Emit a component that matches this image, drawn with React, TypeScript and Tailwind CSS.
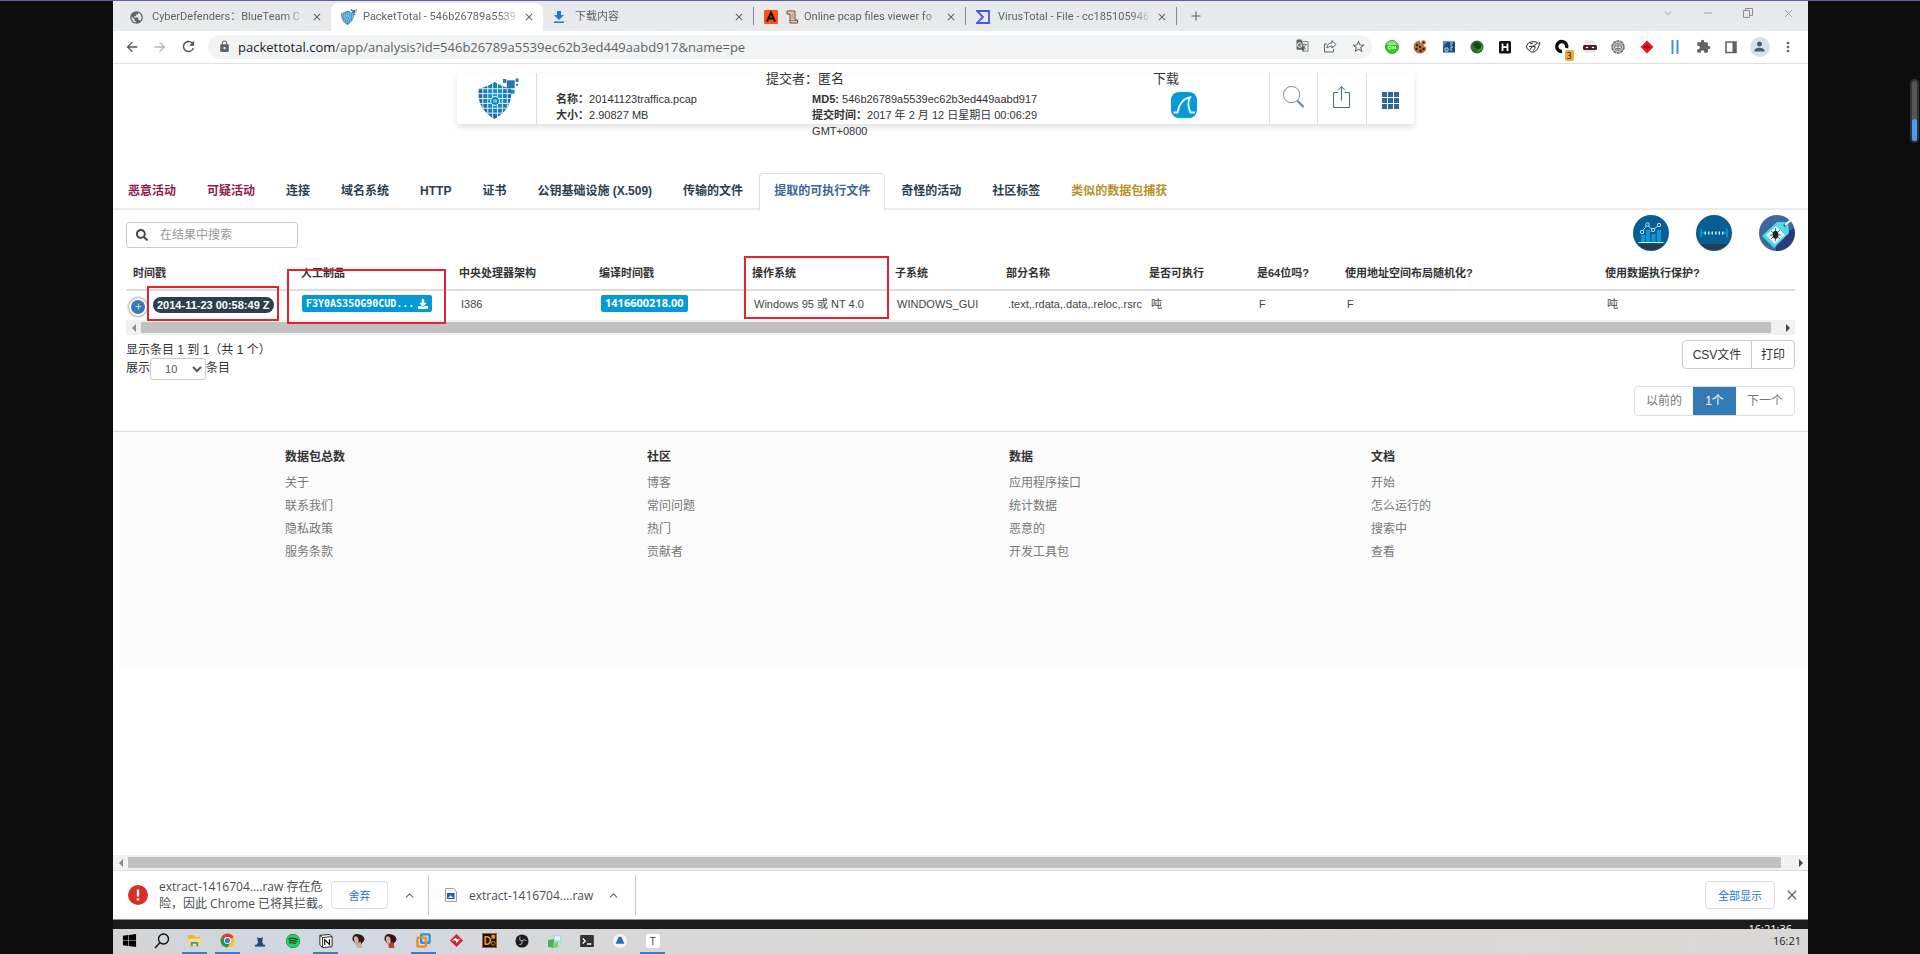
import type { ReactNode } from "react";
import {
  MdArrowBack,
  MdArrowForward,
  MdClose,
  MdExtension,
  MdGTranslate,
  MdLock,
  MdMoreVert,
  MdPerson,
  MdPublic,
  MdRefresh,
  MdStarBorder,
} from "react-icons/md";
import { FaDownload, FaSearch, FaSpotify, FaWindows } from "react-icons/fa";
import { ChevronDown, ChevronUp, Minus, Plus, X } from "lucide-react";

const chromeFont = "font-['Open_Sans','Noto_Sans_CJK_SC',sans-serif]";
const pageFont = "font-['Liberation_Sans','Noto_Sans_CJK_SC',sans-serif]";

function Shield({ className }: { className: string }) {
  const lines = [5, 10, 15, 20, 25, 30];
  return (
    <svg viewBox="0 0 42 42" className={className} aria-hidden="true">
      <defs>
        <clipPath id="shield-shape">
          <path d="M1 11Q10 9 17 4Q24 9 34 11Q36 31 17 42Q-2 31 1 11Z" />
        </clipPath>
        <radialGradient id="shield-fill">
          <stop offset="0" stopColor="#0aa5e2" />
          <stop offset="0.6" stopColor="#1181bd" />
          <stop offset="1" stopColor="#2d5f93" />
        </radialGradient>
      </defs>
      <g clipPath="url(#shield-shape)">
        <rect width="36" height="42" fill="url(#shield-fill)" />
        {lines.map((p) => (
          <g key={p} stroke="#fff" strokeWidth="0.900">
            <path d={`M${p} 0V42`} />
            <path d={`M0 ${p + 6}H36`} />
          </g>
        ))}
      </g>
      <circle cx="17.500" cy="23.500" r="4.500" fill="#0a78b8" stroke="#fff" />
      <rect x="15.500" y="21.500" width="4" height="4" fill="#5cc4ee" />
      <rect x="30" y="3" width="7" height="7" fill="#1181bd" stroke="#2d5f93" />
      <rect x="25.500" y="1" width="3.500" height="4" fill="#2d77ad" />
      <rect x="38.500" y="0.500" width="3" height="3.500" fill="#2d77ad" />
      <rect x="33.500" y="12" width="4" height="4" fill="#1e88c2" />
      <rect x="39" y="6" width="2" height="2" fill="#1e88c2" />
    </svg>
  );
}

function BrowserTab({ icon, title, className }: { icon: ReactNode; title: string; className: string }) {
  return (
    <div className={`flex h-7 items-center pr-2 ${className}`}>
      <span className="flex shrink-0 items-center">{icon}</span>
      <a
        href="#tab"
        className="min-w-0 flex-1 font-['Roboto','Noto_Sans_CJK_SC',sans-serif] text-[11px] whitespace-nowrap text-[#5f6368] [mask-image:linear-gradient(to_right,black_88%,rgba(0,0,0,0.2))]"
      >
        {title}
      </a>
      <button aria-label="关闭标签页" className="text-[#5f6368]">
        <MdClose size={12} />
      </button>
    </div>
  );
}

function TabStrip() {
  return (
    <div className="flex h-[30px] items-end bg-[#e8e9ed]">
      <BrowserTab
        className="w-[218px] gap-2 pl-4"
        icon={<MdPublic size={15} className="text-[#5f6368]" />}
        title="CyberDefenders：BlueTeam C"
      />
      <BrowserTab
        className="w-[212px] gap-1.5 rounded-t-lg bg-white pl-2.5"
        icon={<Shield className="size-4" />}
        title="PacketTotal - 546b26789a5539"
      />
      <BrowserTab
        className="w-[210px] gap-2.5 pl-2.5"
        icon={
          <svg viewBox="0 0 12 14" className="h-3.5 w-3" fill="#1a73e8">
            <path d="M4 1h4v4h3L6 10 1 5h3zM1 11.500h10V13H1z" />
          </svg>
        }
        title="下载内容"
      />
      <span className="mb-1.5 h-[18px] w-px bg-[#85888c]" />
      <BrowserTab
        className="w-[211px] gap-1.5 pl-2.5"
        icon={
          <span className="flex items-center gap-2">
            <svg viewBox="0 0 14 14" className="size-3.5">
              <rect width="14" height="14" rx="1" fill="#ff4f12" />
              <path d="M3 11.500L7 2.500L11 11.500M4.500 8.500H9.500" fill="none" stroke="#111" strokeWidth="2" />
            </svg>
            <svg viewBox="0 0 12 14" className="h-3.5 w-3">
              <path d="M1 1h8v9h2.500v3H4V4H1z" fill="#ecd2b0" stroke="#6b4a35" />
              <path d="M5.500 4h2M5.500 6h2M5.500 8h2M4 10.500h7" stroke="#8a6248" strokeWidth=".8" />
            </svg>
          </span>
        }
        title="Online pcap files viewer fo"
      />
      <span className="mb-1.5 h-[18px] w-px bg-[#85888c]" />
      <BrowserTab
        className="w-[210px] gap-2 pl-2.5"
        icon={
          <svg viewBox="0 0 14 14" className="size-3.5">
            <path d="M1 1H13V13H1L7 7Z" fill="none" stroke="#3f57f5" strokeWidth="1.800" />
          </svg>
        }
        title="VirusTotal - File - cc185105946"
      />
      <span className="mb-1.5 h-[18px] w-px bg-[#85888c]" />
      <button aria-label="打开新的标签页" className="mb-2 ml-3 text-[#5f6368]">
        <Plus size={14} />
      </button>
      <div className="ml-auto flex h-7 items-start text-[#8b8d91]">
        <button aria-label="搜索标签页" className="flex w-10 justify-center pt-1">
          <ChevronDown size={12} strokeWidth={1.500} />
        </button>
        <button aria-label="最小化" className="flex w-10 justify-center pt-1">
          <Minus size={12} strokeWidth={1.500} />
        </button>
        <button aria-label="还原" className="flex w-10 justify-center pt-1">
          <svg viewBox="0 0 12 12" className="size-3" fill="none" stroke="currentColor">
            <path d="M1.500 3.500h6v7h-6zM3.500 3V1.500h7v7H8" />
          </svg>
        </button>
        <button aria-label="关闭" className="flex w-10 justify-center pt-1">
          <X size={13} strokeWidth={1.500} />
        </button>
      </div>
    </div>
  );
}

const extensions: { name: string; icon: ReactNode }[] = [
  {
    name: "开关",
    icon: (
      <svg viewBox="0 0 16 16" className="size-4">
        <circle cx="8" cy="8" r="6.500" fill="#2bd31c" stroke="#5a8a55" />
        <path d="M3 6a5 4 0 0 1 10 0z" fill="#7bf06d" />
        <circle cx="5.800" cy="8.500" r="1.400" fill="none" stroke="#fff" />
        <path d="M9 10V7l2.500 3V7" fill="none" stroke="#fff" />
      </svg>
    ),
  },
  {
    name: "Cookie",
    icon: (
      <svg viewBox="0 0 16 16" className="size-4">
        <path d="M8 1.500a6.500 6.500 0 1 0 6.500 7L12 7l-1-2.500L8.500 4z" fill="#b4703d" />
        <circle cx="11.500" cy="3.500" r="2.300" fill="#b4703d" />
        <g fill="#3d1f10">
          <circle cx="5" cy="6" r="1.200" />
          <circle cx="4.500" cy="10" r="1.200" />
          <circle cx="8" cy="8" r="1.200" />
          <circle cx="8.500" cy="12" r="1.300" />
          <circle cx="11.500" cy="10" r="1.200" />
          <circle cx="11.500" cy="3.500" r="1" />
        </g>
      </svg>
    ),
  },
  {
    name: "数据",
    icon: (
      <svg viewBox="0 0 16 16" className="size-4">
        <rect x="2" y="2.500" width="12" height="11" fill="#1c4a82" />
        <path d="M9 4h3M9 6h2M4 12V9h3v3zM10 12V8h2" stroke="#bcd9f2" fill="none" />
        <path d="M2 2.500h5L2 8z" fill="#3f7fbd" />
      </svg>
    ),
  },
  {
    name: "地球",
    icon: (
      <svg viewBox="0 0 16 16" className="size-4">
        <circle cx="8" cy="8" r="6.500" fill="#2c6f2c" />
        <path d="M4 5q4-4 7 0t-2 5q-4-1-5-5z" fill="#184518" />
        <path d="M9 12q4-1 4-5" stroke="#5ba85b" fill="none" />
      </svg>
    ),
  },
  {
    name: "HackBar",
    icon: (
      <svg viewBox="0 0 16 16" className="size-4">
        <rect x="2" y="2" width="12" height="12.500" rx="1.500" fill="#111" />
        <path d="M5.500 4.500v7.500M10.500 4.500v7.500M5.500 8.200h5" stroke="#fff" strokeWidth="1.800" />
      </svg>
    ),
  },
  {
    name: "草图",
    icon: (
      <svg viewBox="0 0 16 16" className="size-4" fill="none" stroke="#333">
        <path d="M1.500 7q1-4 6-4.500 4 0 6 2l1.500-1-1 3q-1 5-5 6.500-4 1-5-2-3-1-2.500-4z" />
        <path d="M4 7.500q4 1 8-3M5 11q1-4 5-4 1 3-2 4.500M5 5l3-1" />
      </svg>
    ),
  },
  {
    name: "Quick",
    icon: (
      <span className="relative flex size-4">
        <svg viewBox="0 0 16 16" className="size-4" fill="none" stroke="#0b0b0b" strokeWidth="3.400">
          <path d="M12.500 9A5 5 0 1 0 8 12.500" />
        </svg>
        <span className="absolute -right-1 -bottom-1.5 rounded-[2px] bg-[#f2a83c] px-0.5 text-[9px] leading-[11px] text-[#222]">
          3
        </span>
      </span>
    ),
  },
  {
    name: "面具",
    icon: (
      <svg viewBox="0 0 16 16" className="size-4">
        <path d="M3 2h8l2 2v9H3z" fill="#eee" stroke="#ccc" strokeWidth=".6" />
        <rect x="1" y="6" width="14" height="5" rx="1.500" fill="#4c1a22" />
        <ellipse cx="5" cy="8.500" rx="1.400" ry=".8" fill="#fff" />
        <ellipse cx="11" cy="8.500" rx="1.400" ry=".8" fill="#fff" />
      </svg>
    ),
  },
  {
    name: "齿轮",
    icon: (
      <svg viewBox="0 0 16 16" className="size-4">
        <circle cx="8" cy="8" r="6" fill="#c4c4c4" stroke="#6e6e6e" strokeWidth="1.600" strokeDasharray="3 .7" />
        <circle cx="8" cy="8" r="3.500" fill="#eee" stroke="#777" />
        <path d="M5 7h6M6 9.500h4M8 5v6" stroke="#777" />
      </svg>
    ),
  },
  {
    name: "红菱",
    icon: (
      <svg viewBox="0 0 16 16" className="size-4">
        <path d="M8 1.500L14.500 8 8 14.500 1.500 8z" fill="#e5162c" />
        <path d="M5 8h6M8 6v4" stroke="#8a0b1a" strokeWidth="1.500" />
      </svg>
    ),
  },
  {
    name: "暂停",
    icon: (
      <svg viewBox="0 0 16 16" className="size-4">
        <path d="M5.500 1v14M10.500 1v14" stroke="#3b94e6" strokeWidth="2" />
      </svg>
    ),
  },
  { name: "扩展程序", icon: <MdExtension size={15} className="text-[#5f6368]" /> },
  {
    name: "侧边栏",
    icon: (
      <svg viewBox="0 0 16 16" className="size-4">
        <path d="M3 3h10v10.500H3z" fill="none" stroke="#5f6368" strokeWidth="1.600" />
        <path d="M9.500 3H13v10.500H9.500z" fill="#5f6368" />
      </svg>
    ),
  },
  {
    name: "个人资料",
    icon: (
      <span className="flex size-5 items-center justify-center rounded-full bg-[#dbe1e7]">
        <MdPerson size={15} className="text-[#4b5d73]" />
      </span>
    ),
  },
  { name: "更多", icon: <MdMoreVert size={16} className="text-[#5f6368]" /> },
];

function Toolbar() {
  return (
    <div className="flex h-[33px] items-center border-b border-[#dfe0e2] bg-white pr-1.5 pb-px">
      <div className="flex w-[95px] items-center gap-3 pl-[11px] text-[#4f5358]">
        <button aria-label="后退">
          <MdArrowBack size={16} />
        </button>
        <button aria-label="前进" className="text-[#b4b6b9]">
          <MdArrowForward size={16} />
        </button>
        <button aria-label="重新加载">
          <MdRefresh size={17} />
        </button>
      </div>
      <div className="flex h-6 min-w-0 flex-1 items-center rounded-full bg-[#f1f3f4] pl-2.5 text-[#5f6368]">
        <MdLock size={13} />
        <a href="#address" className="ml-[7px] flex-1 truncate text-[13px] leading-6 text-[#5f6368]">
          <span className="text-[#202124]">packettotal.com</span>
          /app/analysis?id=546b26789a5539ec62b3ed449aabd917&amp;name=pe
        </a>
        <div className="flex">
          <button aria-label="翻译此页" className="flex w-7 justify-center">
            <MdGTranslate size={13} />
          </button>
          <button aria-label="分享" className="flex w-7 justify-center">
            <svg viewBox="0 0 14 14" className="size-3.5" fill="none" stroke="currentColor">
              <path d="M4 5H1.500v8h9V10M4 9q0-5 5-5V1.500L13 5.500 9 9V7Q6 7 4 9z" />
            </svg>
          </button>
          <button aria-label="为此页添加书签" className="flex w-7 justify-center">
            <MdStarBorder size={15} />
          </button>
        </div>
      </div>
      <div className="ml-1.5 grid w-[424px] grid-cols-15">
        {extensions.map((e) => (
          <button key={e.name} aria-label={e.name} className="flex items-center justify-center">
            {e.icon}
          </button>
        ))}
      </div>
    </div>
  );
}

function SummaryCard() {
  return (
    <header className="mr-auto ml-[20.3%] flex h-[51px] w-[957px] bg-white text-[11px] leading-4 text-[#333] shadow-[0_3px_6px_rgba(0,0,0,0.12)]">
      <div className="flex w-20 shrink-0 justify-center border-r border-[#dcdcdc] pt-[5px] pl-1">
        <Shield className="size-[41px]" />
      </div>
      <div className="w-[229px] shrink-0 pt-[18px] pl-[19px]">
        <p>
          <b>名称：</b>20141123traffica.pcap
        </p>
        <p>
          <b>大小：</b>2.90827 MB
        </p>
      </div>
      <div className="h-[72px] w-[387px] shrink-0">
        <p className="-mt-0.5 mb-1 text-[13px] leading-4">提交者：匿名</p>
        <div className="ml-[46px] w-[232px]">
          <p>
            <b>MD5:</b> 546b26789a5539ec62b3ed449aabd917
          </p>
          <p>
            <b>提交时间：</b>2017 年 2 月 12 日星期日 00:06:29
            <br />
            GMT+0800
          </p>
        </div>
      </div>
      <div className="flex-1">
        <p className="-mt-0.5 text-[13px] leading-4">下载</p>
        <button aria-label="下载数据包" className="mt-[5px] ml-[18px] block">
          <svg viewBox="0 0 26 26" className="size-[26px]">
            <rect width="26" height="26" rx="8" fill="#0599d8" />
            <path
              d="M2.500 20.500H6.500C8 13 11.500 6.500 19 5.500C16.500 9 17 16 19.500 20.500H24"
              fill="none"
              stroke="#e8f6fd"
              strokeWidth="1.900"
            />
          </svg>
        </button>
      </div>
      <button aria-label="搜索" className="flex w-12 items-center justify-center border-l border-[#dcdcdc] pb-1">
        <svg viewBox="0 0 24 24" className="size-[23px]" fill="none" stroke="#6f83a6">
          <circle cx="10" cy="10" r="8.500" />
          <path d="M16 16.500L22.500 23" strokeWidth="2.200" />
        </svg>
      </button>
      <button aria-label="分享结果" className="flex w-[49px] items-center justify-center border-l border-[#dcdcdc] pb-1">
        <svg viewBox="0 0 20 24" className="h-6 w-5" fill="none" stroke="#456a9e">
          <path d="M6.500 7.500H1.500v15h16v-15h-5M9.500 15.500V1.500M6 5.500l3.500-4 3.500 4" />
        </svg>
      </button>
      <button aria-label="应用" className="flex w-12 items-center justify-center border-l border-[#dcdcdc] pt-1">
        <svg viewBox="0 0 17 17" className="size-[17px]" fill="#2f6795">
          {[0, 6, 12].map((y) => [0, 6, 12].map((x) => <rect key={`${x}-${y}`} x={x} y={y} width="5" height="5" />))}
        </svg>
      </button>
    </header>
  );
}

const navItems = [
  { label: "恶意活动", tone: "border-transparent text-[#8f1d4b]" },
  { label: "可疑活动", tone: "border-transparent text-[#8f1d4b]" },
  { label: "连接", tone: "border-transparent text-[#2c3e50]" },
  { label: "域名系统", tone: "border-transparent text-[#2c3e50]" },
  { label: "HTTP", tone: "border-transparent text-[#2c3e50]" },
  { label: "证书", tone: "border-transparent text-[#2c3e50]" },
  { label: "公钥基础设施 (X.509)", tone: "border-transparent text-[#2c3e50]" },
  { label: "传输的文件", tone: "border-transparent text-[#2c3e50]" },
  { label: "提取的可执行文件", tone: "border-[#ddd] bg-white text-[#3a6798]" },
  { label: "奇怪的活动", tone: "border-transparent text-[#2c3e50]" },
  { label: "社区标签", tone: "border-transparent text-[#2c3e50]" },
  { label: "类似的数据包捕获", tone: "border-transparent text-[#b8902a]" },
];

function ResultNav() {
  return (
    <nav className="flex gap-px border-b-2 border-[#ececec] text-xs font-bold">
      {navItems.map((n) => (
        <a
          key={n.label}
          href="#results"
          className={`-mb-0.5 rounded-t border border-b-0 px-3.5 pt-[9px] pb-[11px] leading-4 whitespace-nowrap ${n.tone}`}
        >
          {n.label}
        </a>
      ))}
    </nav>
  );
}

function SearchRow() {
  return (
    <div className="flex items-start justify-between px-[13px] pt-[5px]">
      <label className="mt-[7px] flex h-[26px] w-[172px] items-center rounded-[3px] border border-[#ccc]">
        <FaSearch size={12} className="ml-[9px] shrink-0 text-[#444]" />
        <input
          aria-label="在结果中搜索"
          placeholder="在结果中搜索"
          className="ml-3 w-full min-w-0 text-xs text-[#555] outline-none placeholder:text-[#999]"
        />
      </label>
      <div className="flex gap-[27px]">
        <button aria-label="图表">
          <svg viewBox="0 0 36 36" className="size-9">
            <circle cx="18" cy="18" r="18" fill="#065e93" />
            <path d="M4.500 29H31.500A18 18 0 0 1 4.500 29z" fill="#2b3a50" />
            <path d="M8 27v-7h4v7zM13 27V15h4v12zM18.500 27v-8h4v8zM24 27V15h4v12z" fill="#0a99dd" />
            <path d="M5.500 27.500h25" stroke="#cfe6f5" />
            <path d="M9 17l5-7 6 5 6-5" fill="none" stroke="#bcd6e6" />
            <g fill="#065e93" stroke="#cfe6f5">
              <circle cx="9" cy="17" r="1.700" />
              <circle cx="14.500" cy="9.500" r="1.700" />
              <circle cx="20" cy="15" r="1.700" />
              <circle cx="26" cy="10" r="1.700" />
            </g>
          </svg>
        </button>
        <button aria-label="时间线">
          <svg viewBox="0 0 36 36" className="size-9">
            <circle cx="18" cy="18" r="18" fill="#065e93" />
            <path d="M4.500 29H31.500A18 18 0 0 1 4.500 29z" fill="#2b3a50" />
            <path d="M5 13.500v9M31 13.500v9M5 18h5M26 18h5" stroke="#0a99dd" strokeWidth="1.500" />
            <path d="M8.500 18h19" stroke="#d3e8f5" strokeWidth="3" strokeDasharray="1.500 2" />
          </svg>
        </button>
        <button aria-label="恶意软件标签">
          <svg viewBox="0 0 36 36" className="size-9">
            <circle cx="18" cy="18" r="18" fill="#3c6a9e" />
            <path d="M35 13a18 18 0 0 1-18 23V30L30 16z" fill="#283b7c" />
            <path d="M18 7l11 0 1 11L15 33 3 21z" fill="#4fd9ec" />
            <path d="M17 11l9 9-10 9-9-9z" fill="#e8f7fa" />
            <path d="M12 16l9 8M21 15l-9 9M16.500 13v13M11 20h11" stroke="#444" strokeWidth=".8" />
            <ellipse cx="16.500" cy="19.800" rx="2.800" ry="4" fill="#222" />
            <circle cx="26" cy="10" r="1.500" fill="#283b7c" />
            <path d="M26 10l6-5" stroke="#dff" strokeWidth="2" />
          </svg>
        </button>
      </div>
    </div>
  );
}

function ScrollTrack({ className, thumb }: { className: string; thumb: string }) {
  return (
    <div className={`flex h-[15px] items-center bg-[#f1f1f1] ${className}`} aria-hidden="true">
      <svg viewBox="0 0 8 8" className="mr-[3px] ml-1 size-2" fill="#8b8b8b">
        <path d="M6 0v8L2 4z" />
      </svg>
      <div className={`h-[11px] flex-1 bg-[#c1c1c1] ${thumb}`} />
      <svg viewBox="0 0 8 8" className="mr-[3px] size-2" fill="#444">
        <path d="M2 0v8l4-4z" />
      </svg>
    </div>
  );
}

const columns = [
  { title: "时间戳", width: "w-[168px]" },
  { title: "人工制品", width: "w-[158px]" },
  { title: "中央处理器架构", width: "w-[140px]" },
  { title: "编译时间戳", width: "w-[153px]" },
  { title: "操作系统", width: "w-[143px]" },
  { title: "子系统", width: "w-[111px]" },
  { title: "部分名称", width: "w-[143px]" },
  { title: "是否可执行", width: "w-[108px]" },
  { title: "是64位吗?", width: "w-[88px]" },
  { title: "使用地址空间布局随机化?", width: "w-[260px]" },
  { title: "使用数据执行保护?", width: "w-auto" },
];

function ResultTable() {
  return (
    <div className="relative mx-[13px] mt-1.5">
      <table className="w-full table-fixed border-collapse text-left text-[11px] whitespace-nowrap text-[#333]">
        <thead>
          <tr className="h-[33px] border-b-2 border-[#ddd]">
            {columns.map((c) => (
              <th key={c.title} className={`pl-[7px] font-bold ${c.width}`}>
                {c.title}
              </th>
            ))}
          </tr>
        </thead>
        <tbody>
          <tr className="h-[30px] text-[#444] *:pb-0.5">
            <td className="pl-[3px]">
              <div className="flex items-center gap-1.5">
                <button
                  aria-label="展开"
                  className="mt-1 flex size-[18px] items-center justify-center rounded-full border-2 border-white bg-[#337ab7] text-white shadow-[0_0_3px_#444]"
                >
                  <Plus size={9} />
                </button>
                <span className="flex h-4 items-center rounded-full bg-[#2c3e50] px-1 text-[11px] leading-4 font-bold text-white">
                  2014-11-23 00:58:49 Z
                </span>
              </div>
            </td>
            <td className="pl-2">
              <a
                href="#artifact"
                className="mb-0.5 inline-flex h-[17px] items-center gap-1 rounded-[2px] bg-[#0599d8] px-1 font-['DejaVu_Sans_Mono',monospace] text-[10px] font-bold text-white"
              >
                F3Y0AS35OG90CUD... <FaDownload size={10} />
              </a>
            </td>
            <td className="pl-[9px]">I386</td>
            <td className="pl-[9px]">
              <span className="mb-0.5 inline-flex h-[17px] items-center rounded-[2px] bg-[#0599d8] px-1 font-['Noto_Sans',sans-serif] text-[11px] font-bold text-white">
                1416600218.00
              </span>
            </td>
            <td className="pl-[9px]">Windows 95 或 NT 4.0</td>
            <td className="pl-[9px]">WINDOWS_GUI</td>
            <td className="pl-[9px]">.text,.rdata,.data,.reloc,.rsrc</td>
            <td className="pl-[9px]">吨</td>
            <td className="pl-[9px]">F</td>
            <td className="pl-[9px]">F</td>
            <td className="pl-[9px]">吨</td>
          </tr>
        </tbody>
      </table>
      <ScrollTrack className="" thumb="mr-[13px]" />
      <div className="pointer-events-none absolute top-[29px] left-[21px] h-[35px] w-[132px] border-2 border-[#e8222c]" />
      <div className="pointer-events-none absolute top-[12px] left-[161px] h-[55px] w-[159px] border-2 border-[#e8222c]" />
      <div className="pointer-events-none absolute -top-px left-[618px] h-[63px] w-[145px] border-2 border-[#e8222c]" />
    </div>
  );
}

function TableControls() {
  return (
    <div className="flex justify-between px-[13px] pt-[5px] text-xs text-[#333]">
      <div className="pt-0.5">
        <p className="leading-4">显示条目 1 到 1（共 1 个）</p>
        <label className="flex items-start leading-5">
          展示
          <select
            defaultValue="10"
            className="h-[22px] w-14 rounded-[3px] border border-[#ccc] bg-white pl-2.5 text-[11px] text-[#555]"
          >
            <option>10</option>
            <option>25</option>
            <option>50</option>
          </select>
          条目
        </label>
      </div>
      <div className="flex flex-col items-end gap-[17px]">
        <div className="flex h-[29px] rounded border border-[#ccc]">
          <button className="w-[69px] border-r border-[#ccc]">CSV文件</button>
          <button className="w-[42px]">打印</button>
        </div>
        <div className="flex h-[30px] overflow-hidden rounded border border-[#ddd] text-[#777]">
          <button className="w-[58px]">以前的</button>
          <button className="-my-px w-[43px] bg-[#337ab7] text-white">1个</button>
          <button className="w-[58px]">下一个</button>
        </div>
      </div>
    </div>
  );
}

const footerColumns = [
  { title: "数据包总数", links: ["关于", "联系我们", "隐私政策", "服务条款"] },
  { title: "社区", links: ["博客", "常问问题", "热门", "贡献者"] },
  { title: "数据", links: ["应用程序接口", "统计数据", "恶意的", "开发工具包"] },
  { title: "文档", links: ["开始", "怎么运行的", "搜索中", "查看"] },
];

function Footer() {
  return (
    <footer className="mt-[15px] grid min-h-[238px] grid-cols-4 border-t border-[#ddd] bg-[#fbfbfb] pt-4 pr-[75px] pl-[172px] text-xs">
      {footerColumns.map((c) => (
        <section key={c.title}>
          <h2 className="mb-1.5 leading-[18px] font-bold text-[#333]">{c.title}</h2>
          <ul>
            {c.links.map((l) => (
              <li key={l} className="leading-[23px]">
                <a href="#footer" className="text-[#777]">
                  {l}
                </a>
              </li>
            ))}
          </ul>
        </section>
      ))}
    </footer>
  );
}

function DownloadBar() {
  return (
    <div className="flex h-[49px] items-center border-t border-[#dadce0] bg-white pl-[15px] text-xs leading-[17px] text-[#4a4d52]">
      <svg viewBox="0 0 20 20" className="size-5 shrink-0">
        <circle cx="10" cy="10" r="10" fill="#d93025" />
        <path d="M10 4.500v7M10 13.200v2.300" stroke="#fff" strokeWidth="2.400" />
      </svg>
      <p className="ml-[11px] w-[172px] whitespace-nowrap">
        extract-1416704....raw 存在危
        <br />
        险，因此 Chrome 已将其拦截。
      </p>
      <button className="h-7 w-[57px] rounded border border-[#dadce0] text-[11px] text-[#1a73e8]">舍弃</button>
      <button aria-label="更多操作" className="ml-[15px] text-[#5f6368]">
        <ChevronUp size={13} />
      </button>
      <span className="ml-3 h-10 w-px bg-[#c8cacd]" />
      <svg viewBox="0 0 12 14" className="ml-4 h-3.5 w-3">
        <path d="M.5.500h8l3 3v10H.500z" fill="#f4f6f8" stroke="#9aa3ad" />
        <rect x="2" y="5" width="7.500" height="6" fill="#1d5fa8" />
        <path d="M3 10l2.500-3 3 3z" fill="#bfe3ff" />
      </svg>
      <a href="#file" className="ml-3 w-[126px] whitespace-nowrap">
        extract-1416704....raw
      </a>
      <button aria-label="文件操作" className="ml-3 text-[#5f6368]">
        <ChevronUp size={13} />
      </button>
      <span className="ml-[15px] h-10 w-px bg-[#c8cacd]" />
      <button className="ml-auto h-7 w-[70px] rounded border border-[#dadce0] text-[11px] text-[#1a73e8]">
        全部显示
      </button>
      <button aria-label="关闭下载栏" className="mr-2 ml-[9px] text-[#5f6368]">
        <MdClose size={16} />
      </button>
    </div>
  );
}

function Portrait({ dress }: { dress: string }) {
  return (
    <svg viewBox="0 0 16 16" className="size-[15px]">
      <path d="M1.500 7Q1 1 7 1q6 .5 7.500 5.500 0 3-3 4.500l-1 4-4-2-3-3z" fill="#2b1a18" />
      <path d="M3 5q2-3 4.500 0 1 2 .5 5l-2 2.500q-3-2-3-7.500z" fill="#dcae96" />
      <path d="M6 12l4-3 2.500 7H6z" fill={dress} />
    </svg>
  );
}

const taskItems: { name: string; open?: boolean; icon: ReactNode }[] = [
  { name: "开始", icon: <FaWindows size={15} className="text-black" /> },
  {
    name: "搜索",
    icon: (
      <svg viewBox="0 0 16 16" className="size-4" fill="none" stroke="#111" strokeWidth="1.400">
        <circle cx="9.500" cy="6" r="5" />
        <path d="M6 9.500L1 15" />
      </svg>
    ),
  },
  {
    name: "文件资源管理器",
    open: true,
    icon: (
      <svg viewBox="0 0 16 16" className="size-[15px]">
        <path d="M1 2h6l1 2h6v10H1z" fill="#f2b634" />
        <path d="M1 6h14v8H1z" fill="#fbdc7c" />
        <path d="M4 14V9.500h8V14h-2v-2.500H6V14z" fill="#3b8fd6" />
      </svg>
    ),
  },
  {
    name: "Chrome",
    open: true,
    icon: (
      <svg viewBox="0 0 16 16" className="size-[15px]">
        <circle cx="8" cy="8" r="7.500" fill="#fbc116" />
        <path d="M8 8L1.500 4.300A7.500 7.500 0 0 1 14.500 4.300z" fill="#e33b2e" />
        <path d="M8 8L1.500 4.300A7.500 7.500 0 0 0 8 15.500L10.500 11z" fill="#229a4a" />
        <circle cx="8" cy="8" r="3.700" fill="#fff" />
        <circle cx="8" cy="8" r="2.800" fill="#2f7de9" />
      </svg>
    ),
  },
  {
    name: "猫",
    icon: (
      <svg viewBox="0 0 14 16" className="h-3.5 w-3">
        <path d="M4 3l1.500 1.500h3L10 3v4l-.5 2 2 4.500h-9L5 9 4 7z" fill="#274474" />
        <path d="M1 12.500h12v2H1z" fill="#274474" />
      </svg>
    ),
  },
  { name: "Spotify", icon: <FaSpotify size={14} className="rounded-full bg-[#17351f] text-[#1ed760]" /> },
  {
    name: "Notion",
    open: true,
    icon: (
      <svg viewBox="0 0 16 16" className="size-3.5">
        <path d="M1 1.500l11-1 3 2.500v11.500l-11 1-3-3z" fill="#fff" stroke="#111" />
        <path d="M1 1.500l3 2.500 11-1M4 4v11" fill="none" stroke="#111" />
        <path d="M6.500 12.500V6.500l5.500 5.500V6" fill="none" stroke="#111" strokeWidth="1.400" />
      </svg>
    ),
  },
  { name: "头像一", icon: <Portrait dress="#c9b29e" /> },
  { name: "头像二", icon: <Portrait dress="#c93a30" /> },
  {
    name: "VMware",
    open: true,
    icon: (
      <svg viewBox="0 0 16 16" className="size-[15px]" fill="none" strokeWidth="2.500">
        <rect x="5.500" y="1.500" width="9" height="9" rx="1" stroke="#1f9ad6" />
        <rect x="1.500" y="5" width="9" height="9.500" rx="1" stroke="#f08c1c" />
      </svg>
    ),
  },
  {
    name: "红色工具",
    icon: (
      <svg viewBox="0 0 16 16" className="size-[15px]">
        <path d="M8 1l7 7-7 7-7-7z" fill="#cf2233" />
        <path d="M3 8l4-3 2 2 3-1-4 5-1-3z" fill="#fff" />
      </svg>
    ),
  },
  {
    name: "DC",
    icon: (
      <svg viewBox="0 0 16 16" className="size-[15px]">
        <rect x=".5" y=".5" width="15" height="15" fill="#151008" stroke="#a8641a" />
        <path d="M3.500 4H6q3 1 3 4t-3 4H3.500z" fill="none" stroke="#f0921e" strokeWidth="1.800" />
        <path d="M10 2h4v4h-4z" fill="#f0921e" />
        <circle cx="12" cy="11" r="2" fill="none" stroke="#f0921e" />
      </svg>
    ),
  },
  {
    name: "OBS",
    icon: (
      <svg viewBox="0 0 16 16" className="size-3.5">
        <circle cx="8" cy="8" r="7.500" fill="#1c1c1e" />
        <path d="M8 8Q4 7 6 3M8 8q3-3 5 0M8 8q1 4-3 4" fill="none" stroke="#aaa" strokeWidth="1.200" />
      </svg>
    ),
  },
  {
    name: "主机",
    icon: (
      <svg viewBox="0 0 16 16" className="size-4">
        <path d="M6 1l9 1v8l-9-1z" fill="#a8dfe0" />
        <path d="M8 3l5 .5v4L8 7z" fill="#e2f6f7" />
        <path d="M1 7l6-1v9l-6-1z" fill="#4eb05a" />
        <path d="M6 10l5-1v5l-5 1z" fill="#7fcf6b" />
      </svg>
    ),
  },
  {
    name: "终端",
    icon: (
      <svg viewBox="0 0 16 14" className="h-3 w-3.5">
        <rect width="16" height="14" rx="1" fill="#333" />
        <path d="M3 4l3 3-3 3M8 10.500h5" fill="none" stroke="#fff" strokeWidth="1.500" />
      </svg>
    ),
  },
  {
    name: "山峰",
    icon: (
      <svg viewBox="0 0 16 16" className="size-3.5">
        <circle cx="8" cy="8" r="8" fill="#f3f5f8" />
        <path d="M6.500 3h3l3.500 8H3z" fill="#2f6db5" />
      </svg>
    ),
  },
  {
    name: "Typora",
    open: true,
    icon: (
      <span className="flex size-3.5 items-center justify-center rounded-[2px] bg-white text-[10px] leading-none text-[#333]">
        T
      </span>
    ),
  },
];

function Taskbar() {
  return (
    <div>
      <div className="flex h-2.5 items-start overflow-hidden border-t border-[#8f8f8f] bg-[#1c1c1c] pr-4">
        <span className="ml-auto pt-[3px] text-[11px] leading-3 text-white">16:21:36</span>
      </div>
      <div className="flex h-[25px] justify-between bg-[linear-gradient(to_right,#d3d4d5,#d0d8e2_12%,#d8d8d8_30%,#dcd9d5_92%,#d8d8d8)]">
        <div className="grid w-[556px] grid-cols-17">
          {taskItems.map((t) => (
            <button
              key={t.name}
              aria-label={t.name}
              className={`mx-1 flex items-center justify-center border-b-2 ${
                t.open ? "border-[#2f80d0]" : "border-transparent"
              }`}
            >
              {t.icon}
            </button>
          ))}
        </div>
        <time className="pr-[7px] text-[11px] leading-6 text-[#222]">16:21</time>
      </div>
    </div>
  );
}

export default function App() {
  return (
    <div
      className={`relative flex min-h-screen flex-col border-t border-[#5c5fa8] bg-[#0d0d0d] pr-28 pl-[113px] ${chromeFont}`}
    >
      <TabStrip />
      <Toolbar />
      <main className={`flex flex-1 flex-col bg-white ${pageFont}`}>
        <div className="h-[109px] pt-[9px]">
          <SummaryCard />
        </div>
        <ResultNav />
        <SearchRow />
        <ResultTable />
        <TableControls />
        <Footer />
        <ScrollTrack className="mt-auto" thumb="mr-4" />
      </main>
      <DownloadBar />
      <Taskbar />
      <div
        aria-hidden="true"
        className="absolute top-[78px] right-px flex h-16 w-[9px] flex-col justify-end rounded-full border-2 border-[#333] bg-[#555]"
      >
        <div className="h-[22px] rounded-full bg-[#4b9bf5]" />
      </div>
    </div>
  );
}
